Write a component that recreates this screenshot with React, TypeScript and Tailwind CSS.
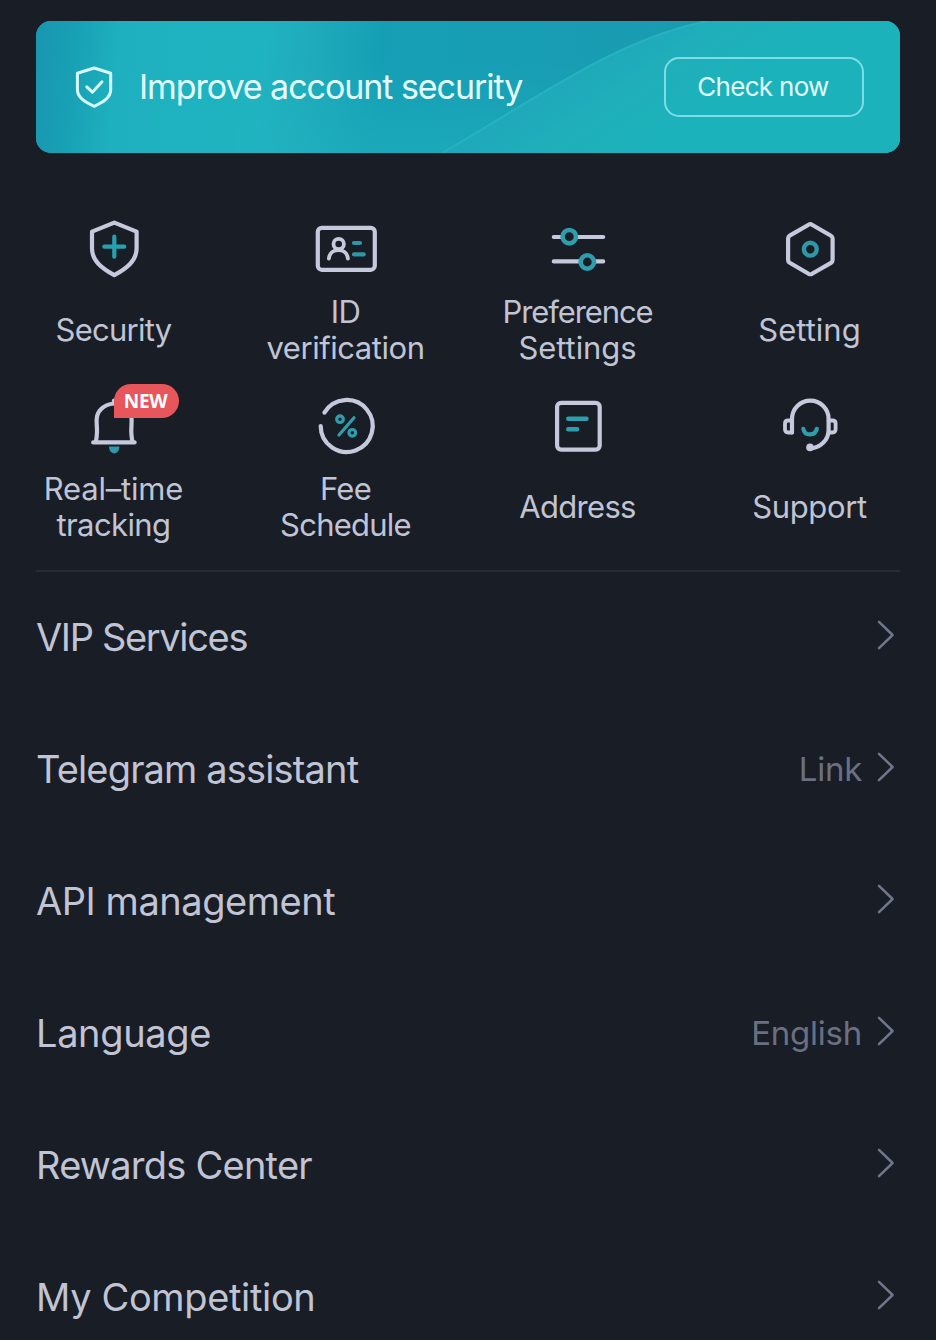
import type { ReactNode } from 'react'
import clsx from 'clsx'

interface Shortcut {
  lines: { text: string; className?: string }[]
  icon: ReactNode
  badge?: string
}

interface MenuItem {
  label: string
  className?: string
  value?: string
}

function Icon({ children }: { children: ReactNode }) {
  return (
    <svg
      width="64"
      height="64"
      viewBox="0 0 64 64"
      fill="none"
      strokeWidth="4.2"
      strokeLinecap="round"
      strokeLinejoin="round"
      className="stroke-[#c5c9dc]"
    >
      {children}
    </svg>
  )
}

const shortcuts: Shortcut[] = [
  {
    lines: [{ text: 'Security', className: 'tracking-[-0.75px]' }],
    icon: (
      <Icon>
        <path d="M32.3 5.6 54.6 14.6V31.5C54.6 44 44.5 51.5 32.3 58.2C20.1 51.5 10 44 10 31.5V14.6Z" />
        <path d="M32.3 19.7V39.7M22.3 29.7H42.3" className="stroke-[#27a0ae]" />
      </Icon>
    ),
  },
  {
    lines: [{ text: 'ID', className: 'tracking-[-0.5px]' }, { text: 'verification', className: 'tracking-[-0.45px]' }],
    icon: (
      <Icon>
        <rect x="3.8" y="10.8" width="57" height="42" rx="4" />
        <circle cx="24.7" cy="27" r="5.2" strokeWidth="3.8" />
        <path d="M14.9 41.5C15.5 35.8 19.5 33 24.4 33S33.3 35.8 33.9 41.5" strokeWidth="3.8" />
        <path d="M40 26H46M40 37.4H49.7" className="stroke-[#3096a3]" />
      </Icon>
    ),
  },
  {
    lines: [{ text: 'Preference', className: 'tracking-[-1.1px]' }, { text: 'Settings', className: 'tracking-[-0.1px]' }],
    icon: (
      <Icon>
        <path d="M7.8 20H57.2M7.8 44.4H57.2" />
        <circle cx="23.3" cy="19.7" r="6.7" strokeWidth="4.6" className="fill-[#191d26] stroke-[#2f9dac]" />
        <circle cx="41.3" cy="45" r="6.7" strokeWidth="4.6" className="fill-[#191d26] stroke-[#2f9dac]" />
      </Icon>
    ),
  },
  {
    lines: [{ text: 'Setting' }],
    icon: (
      <Icon>
        <path d="M30.6 7.7Q32.3 6.7 34 7.7L53 18.7Q54.6 19.6 54.6 21.5V43Q54.6 44.9 53 45.8L34 56.8Q32.3 57.7 30.6 56.8L11.7 45.8Q10.1 44.9 10.1 43V21.5Q10.1 19.6 11.7 18.7Z" />
        <circle cx="32.3" cy="32.2" r="6.4" strokeWidth="4.4" className="stroke-[#2f97a5]" />
      </Icon>
    ),
  },
  {
    lines: [{ text: 'Real–time', className: 'tracking-[-0.2px]' }, { text: 'tracking', className: 'tracking-[-0.6px]' }],
    badge: 'NEW',
    icon: (
      <Icon>
        <path d="M32 9.5C21 10.5 14.6 17.5 14.6 26C14.6 31 15.1 34 15 38C14.9 42 14.4 45 13.9 48M32 9.5C43 10.5 49.6 17.5 49.6 26C49.6 31 49.2 34 49.3 38C49.4 42 50 45 50.4 48" />
        <path d="M32 6.5V9" />
        <path d="M11.2 48.4H52.6" />
        <path d="M27 52.6H37.4C37.4 57 35 59.4 32.2 59.4S27 57 27 52.6Z" className="fill-[#2f97a5] stroke-none" />
      </Icon>
    ),
  },
  {
    lines: [{ text: 'Fee', className: 'tracking-[-0.8px]' }, { text: 'Schedule', className: 'tracking-[-0.75px]' }],
    icon: (
      <Icon>
        <path d="M10.4 18.6A26 26 0 1 1 6.7 32" />
        <g strokeWidth="3.2" className="stroke-[#2f9dac]">
          <circle cx="26" cy="25.2" r="3.3" />
          <circle cx="38.3" cy="38.8" r="3.3" />
          <path d="M25 41 40 23.8" />
        </g>
      </Icon>
    ),
  },
  {
    lines: [{ text: 'Address', className: 'tracking-[-0.7px]' }],
    icon: (
      <Icon>
        <rect x="11.1" y="8.8" width="42.6" height="46.8" rx="4" />
        <path d="M22.2 24.8H40.5M22.2 35.2H31.2" strokeWidth="4.4" className="stroke-[#2f9dac]" />
      </Icon>
    ),
  },
  {
    lines: [{ text: 'Support', className: 'tracking-[-0.4px]' }],
    icon: (
      <Icon>
        <path d="M14 38.5V25A18.3 18.3 0 0 1 50.6 25V36C50.6 46.5 42 53.6 33 54.4" />
        <path d="M14 26.5H10.2Q7 26.5 7 29.7V35.3Q7 38.5 10.2 38.5H14" strokeWidth="3.8" />
        <path d="M50.6 26.5H54.4Q57.6 26.5 57.6 29.7V35.3Q57.6 38.5 54.4 38.5H50.6" strokeWidth="3.8" />
        <circle cx="32" cy="53.4" r="3.8" className="fill-[#c5c9dc] stroke-none" />
        <path d="M25.3 34.8C26 38.6 28.7 40.4 32 40.4S38 38.6 38.8 34.8" className="stroke-[#2f9dac]" />
      </Icon>
    ),
  },
]

const menuItems: MenuItem[] = [
  { label: 'VIP Services', className: 'tracking-[-1.35px]' },
  { label: 'Telegram assistant', value: 'Link', className: 'tracking-[-0.85px]' },
  { label: 'API management', className: 'tracking-[-0.45px]' },
  { label: 'Language', value: 'English', className: 'tracking-[-0.35px]' },
  { label: 'Rewards Center', className: 'tracking-[-0.75px]' },
  { label: 'My Competition', className: 'tracking-[-0.35px]' },
]

function SecurityBanner() {
  return (
    <div className="relative flex h-[132px] shrink-0 items-center justify-between overflow-hidden rounded-[15px] bg-[#1eb0bf] pl-[38px] pr-9">
      <svg
        className="absolute inset-0"
        width="864"
        height="132"
        viewBox="0 0 864 132"
        preserveAspectRatio="none"
      >
        <defs>
          <linearGradient id="base" gradientUnits="userSpaceOnUse" x1="0" y1="0" x2="640" y2="60">
            <stop offset="0" stopColor="#1996b0" />
            <stop offset="0.07" stopColor="#18a2b6" />
            <stop offset="0.13" stopColor="#1eb0be" />
            <stop offset="0.35" stopColor="#1fb3c0" />
            <stop offset="0.43" stopColor="#1fabbb" />
            <stop offset="0.54" stopColor="#159fb5" />
            <stop offset="1" stopColor="#1a9bb2" />
          </linearGradient>
          <linearGradient id="shade" x1="0" y1="0" x2="0" y2="1">
            <stop offset="0.3" stopColor="#20b3bf" stopOpacity="0" />
            <stop offset="1" stopColor="#20b3bf" stopOpacity="0.5" />
          </linearGradient>
          <linearGradient id="wave" gradientUnits="userSpaceOnUse" x1="540" y1="50" x2="600" y2="140">
            <stop offset="0" stopColor="#1fa9ba" />
            <stop offset="0.5" stopColor="#1fb0ba" />
            <stop offset="1" stopColor="#1bb2bb" />
          </linearGradient>
        </defs>
        <rect width="864" height="132" fill="url(#base)" />
        <rect x="200" width="664" height="132" fill="url(#shade)" />
        <path d="M406 132C500 78 580 18 672 0H864V132Z" fill="url(#wave)" />
        <path d="M406 132C500 78 580 18 672 0" fill="none" stroke="#25b3be" strokeWidth="2" />
      </svg>
      <div className="relative flex items-center">
        <svg
          width="40"
          height="44"
          viewBox="0 0 40 44"
          fill="none"
          strokeWidth="3"
          strokeLinecap="round"
          strokeLinejoin="round"
          className="stroke-[#d8fbfd]"
        >
          <path d="M20.2 3 36.7 8.2V24.5C36.7 33 28.5 37.6 20.2 41.4C11.9 37.6 3.4 33 3.4 24.5V8.2Z" />
          <path d="M12.8 21.8 18.4 27.2 28 16.8" />
        </svg>
        <span className="ml-[25px] whitespace-nowrap text-[34px] leading-none tracking-[-1.05px] text-[#e2fcfd]">
          Improve account security
        </span>
      </div>
      <button className="relative h-[60px] w-[200px] whitespace-nowrap rounded-[15px] border-2 border-[#7edde4] pr-0.5 text-[26px] leading-none tracking-[-0.7px] text-[#e2fcfd]">
        Check now
      </button>
    </div>
  )
}

export default function App() {
  return (
    <main className="flex h-[1340px] w-[936px] flex-col overflow-hidden bg-[#191d26] px-9 pt-[21px] font-['Inter',sans-serif] text-[#c0c4d4]">
      <SecurityBanner />

      <div className="-ml-[38px] mt-16 grid w-[928px] shrink-0 grid-cols-4 gap-y-7">
        {shortcuts.map((item) => (
          <div key={item.lines[0].text} className="flex flex-col items-center">
            <div className="relative">
              {item.icon}
              {item.badge && (
                <span className="absolute -top-2.5 left-8 flex h-[34px] w-[65px] items-center justify-center rounded-[17px] rounded-bl-none bg-[#e7565b] pr-0.5 font-['Noto_Sans',sans-serif] text-[19px] font-bold tracking-[-0.4px] text-white">
                  {item.badge}
                </span>
              )}
            </div>
            <div className="mr-px mt-3 flex h-[73px] flex-col items-center justify-center whitespace-nowrap text-[31px] leading-9">
              {item.lines.map((line) => (
                <span key={line.text} className={clsx('block', line.className)}>
                  {line.text}
                </span>
              ))}
            </div>
          </div>
        ))}
      </div>

      <div className="mt-[27px] h-0.5 shrink-0 bg-[#272b36]" />

      <nav className="-mt-px flex flex-col">
        {menuItems.map((item) => (
          <a key={item.label} className="flex h-[132px] shrink-0 items-center justify-between pr-[5px]">
            <span className={clsx('whitespace-nowrap text-[38px] leading-none', item.className)}>
              {item.label}
            </span>
            <span className="flex items-center gap-[15px] text-[33px] leading-none tracking-[-0.25px] text-[#6a7082]">
              {item.value}
              <svg
                width="18"
                height="30"
                viewBox="0 0 18 30"
                fill="none"
                strokeWidth="2.5"
                strokeLinecap="round"
                strokeLinejoin="round"
                className="-mt-1 stroke-[#70768a]"
              >
                <path d="M2 1.8 15.6 15 2 28.2" />
              </svg>
            </span>
          </a>
        ))}
      </nav>
    </main>
  )
}
